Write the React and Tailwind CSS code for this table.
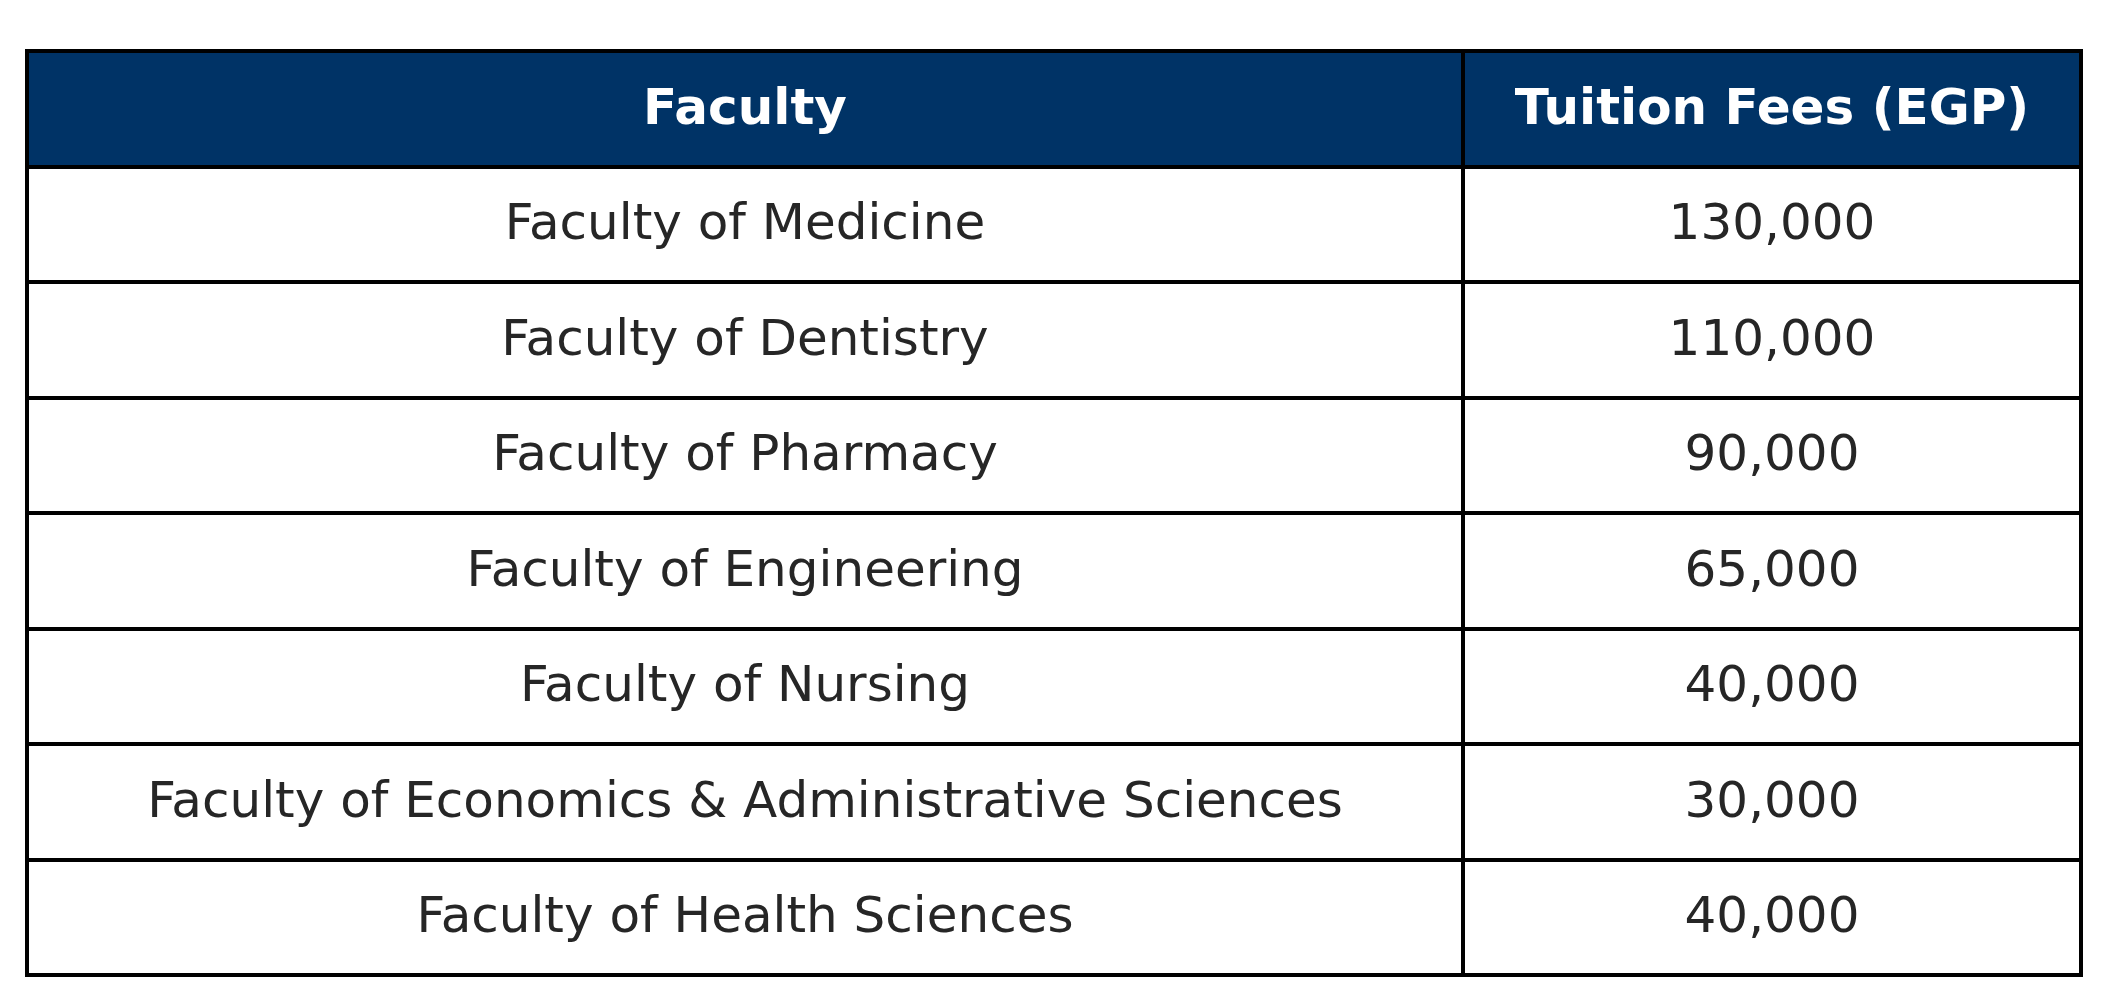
import React from 'react'

const rows = [
  ['Faculty of Medicine', '130,000'],
  ['Faculty of Dentistry', '110,000'],
  ['Faculty of Pharmacy', '90,000'],
  ['Faculty of Engineering', '65,000'],
  ['Faculty of Nursing', '40,000'],
  ['Faculty of Economics & Administrative Sciences', '30,000'],
  ['Faculty of Health Sciences', '40,000'],
]

function App() {
  return (
    <main className='w-[2113px] h-[1005px] bg-white pt-[49px] pl-[25px]' style={{ fontFamily: '"DejaVu Sans", sans-serif' }}>
      <table className='w-[2058px] border-collapse border-[4px] border-black'>
        <thead>
          <tr className='h-[115.5px]'>
            <th className='w-[1436px] border-[4px] border-black bg-[#003366] text-white text-[50px] font-bold text-center leading-none pb-[4px]'>Faculty</th>
            <th className='border-[4px] border-black bg-[#003366] text-white text-[50px] font-bold text-center leading-none pb-[4px]'>Tuition Fees (EGP)</th>
          </tr>
        </thead>
        <tbody>
          {rows.map(([faculty, fee]) => (
            <tr key={faculty} className='h-[115.5px]'>
              <td className='border-[4px] border-black text-center text-[50px] text-[#262626] leading-none pb-[4px]'>{faculty}</td>
              <td className='border-[4px] border-black text-center text-[50px] text-[#262626] leading-none pb-[4px]'>{fee}</td>
            </tr>
          ))}
        </tbody>
      </table>
    </main>
  )
}

export default App
